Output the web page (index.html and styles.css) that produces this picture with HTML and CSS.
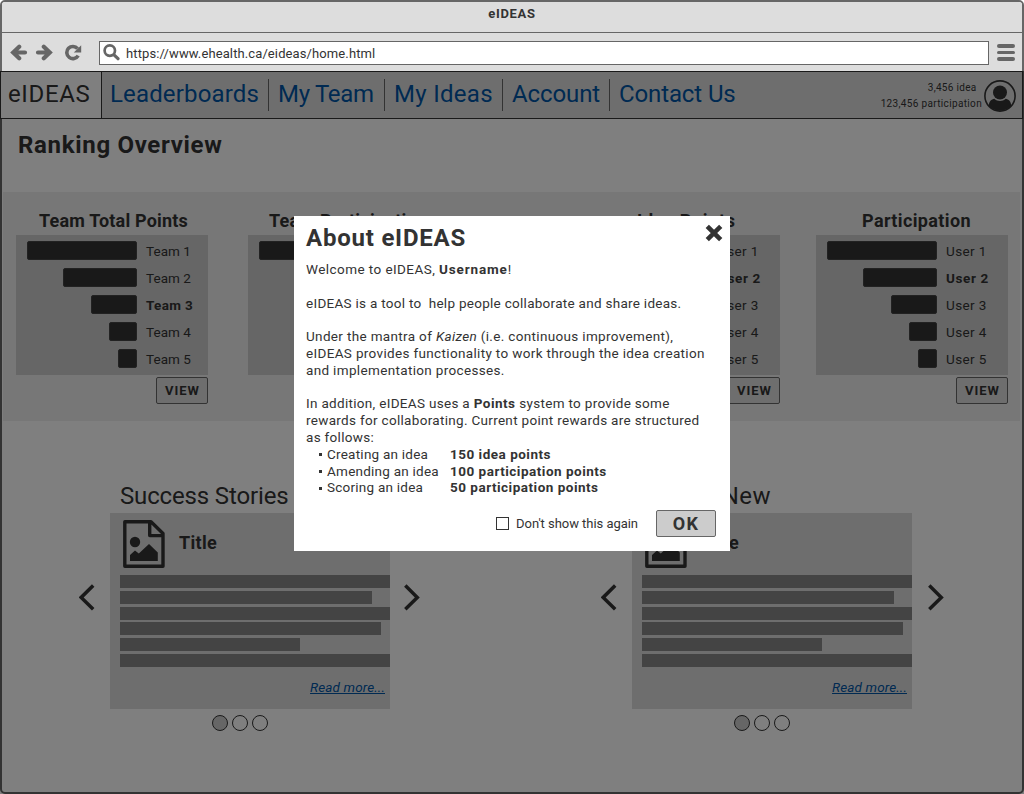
FILE: index.html
```
<!DOCTYPE html>
<html lang="en">
<head>
<meta charset="utf-8">
<title>eIDEAS</title>
<link rel="stylesheet" href="styles.css">
</head>
<body>
<svg class="defs" aria-hidden="true">
  <symbol id="picture" viewBox="0 0 42 48">
    <path d="M1.8 1.8H28L40 13.5V46.2H1.8Z M26.7 2V15.6H40" fill="none" stroke="currentColor" stroke-width="3.4" stroke-linejoin="round"/>
    <circle cx="12" cy="22" r="5.2" fill="currentColor"/>
    <path d="M7 41V35L12 30.5L15.8 33.5L26 24L34.8 32.5V41Z" fill="currentColor"/>
  </symbol>
  <symbol id="chev-left" viewBox="0 0 16 27"><path d="M14.2 1.5L2.2 13.4L14.2 25.3" fill="none" stroke="currentColor" stroke-width="3.5"/></symbol>
  <symbol id="chev-right" viewBox="0 0 16 27"><path d="M1.3 1.5L13.3 13.4L1.3 25.3" fill="none" stroke="currentColor" stroke-width="3.5"/></symbol>
</svg>
<div class="window">
  <div class="frame">
    <header class="titlebar">eIDEAS</header>
    <div class="toolbar">
      <svg class="tool-icon back" width="18" height="17" viewBox="0 0 18 17"><path d="M9.2 2.7L3.2 8.5L9.2 14.3M4 8.5H15" fill="none" stroke="currentColor" stroke-width="4.2" stroke-linecap="round" stroke-linejoin="miter"/></svg>
      <svg class="tool-icon forward" width="18" height="17" viewBox="0 0 18 17"><path d="M8.8 2.7L14.8 8.5L8.8 14.3M14 8.5H3" fill="none" stroke="currentColor" stroke-width="4.2" stroke-linecap="round" stroke-linejoin="miter"/></svg>
      <svg class="tool-icon reload" width="18" height="17" viewBox="0 0 18 17"><path d="M12.6 4.6A6.1 6.1 0 1 0 13.2 11.6" fill="none" stroke="currentColor" stroke-width="3.6"/><path d="M16.2 1.2V8.4H8.8Z" fill="currentColor"/></svg>
      <div class="address">
        <svg class="tool-icon" width="17" height="17" viewBox="0 0 17 17"><circle cx="6.8" cy="6.6" r="5.2" fill="none" stroke="currentColor" stroke-width="2.7"/><path d="M11 10.8L15 14.7" stroke="currentColor" stroke-width="3.2" stroke-linecap="round"/></svg>
        <span class="url">https://www.ehealth.ca/eideas/home.html</span>
      </div>
      <div class="menu"><i></i><i></i><i></i></div>
    </div>
    <nav class="nav">
      <a class="brand">eIDEAS</a>
      <a class="link leaderboards">Leaderboards</a>
      <a class="link team">My Team</a>
      <a class="link ideas">My Ideas</a>
      <a class="link account">Account</a>
      <a class="link contact">Contact Us</a>
      <div class="score"><span class="score-idea">3,456 idea</span><span class="score-part">123,456 participation</span></div>
      <svg class="avatar" width="32" height="32" viewBox="0 0 32 32"><circle cx="16" cy="16" r="15.1" fill="none" stroke="currentColor" stroke-width="1.6"/><circle cx="16" cy="12.5" r="7" fill="currentColor"/><path d="M4.8 26C4.8 21.5 7.5 19.3 10.3 18.8C13.5 21.8 18.5 21.8 21.7 18.8C24.5 19.3 27.2 21.5 27.2 26C21 32.3 11 32.3 4.8 26Z" fill="currentColor"/></svg>
    </nav>
    <main>
      <h1 class="page-title">Ranking Overview</h1>
      <section class="rankings">
        <article class="rank">
          <h2 class="h-total">Team Total Points</h2>
          <ul class="chart">
            <li><i class="bar b1"></i><span>Team 1</span></li><li><i class="bar b2"></i><span>Team 2</span></li><li><i class="bar b3"></i><b>Team 3</b></li><li><i class="bar b4"></i><span>Team 4</span></li><li><i class="bar b5"></i><span>Team 5</span></li>
          </ul>
          <button class="view">VIEW</button>
        </article>
        <article class="rank">
          <h2 class="h-teampart">Team Participation</h2>
          <ul class="chart">
            <li><i class="bar b1"></i></li>
          </ul>
        </article>
        <article class="rank push">
          <h2 class="h-idea">Idea Points</h2>
          <ul class="chart users">
            <li><span>User 1</span></li><li><b>User 2</b></li><li><span>User 3</span></li><li><span>User 4</span></li><li><span>User 5</span></li>
          </ul>
          <button class="view">VIEW</button>
        </article>
        <article class="rank last">
          <h2 class="h-part">Participation</h2>
          <ul class="chart users">
            <li><i class="bar b1"></i><span>User 1</span></li><li><i class="bar b2"></i><b>User 2</b></li><li><i class="bar b3"></i><span>User 3</span></li><li><i class="bar b4"></i><span>User 4</span></li><li><i class="bar b5"></i><span>User 5</span></li>
          </ul>
          <button class="view">VIEW</button>
        </article>
      </section>
      <section class="carousels">
        <article class="carousel">
          <h2>Success Stories</h2>
          <svg class="arrow"><use href="#chev-left"/></svg>
          <div class="card">
            <div class="card-head"><svg class="picture"><use href="#picture"/></svg><h3>Title</h3></div>
            <div class="lines"><i></i><i class="l2"></i><i></i><i class="l4"></i><i class="l5"></i><i></i></div>
            <a class="more">Read more...</a>
          </div>
          <svg class="arrow next"><use href="#chev-right"/></svg>
          <div class="dots"><i class="on"></i><i></i><i></i></div>
        </article>
        <article class="carousel wide">
          <h2 class="whats-new">What's New</h2>
          <svg class="arrow"><use href="#chev-left"/></svg>
          <div class="card">
            <div class="card-head"><svg class="picture"><use href="#picture"/></svg><h3>Title</h3></div>
            <div class="lines"><i></i><i class="l2"></i><i></i><i class="l4"></i><i class="l5"></i><i></i></div>
            <a class="more">Read more...</a>
          </div>
          <svg class="arrow next"><use href="#chev-right"/></svg>
          <div class="dots"><i class="on"></i><i></i><i></i></div>
        </article>
      </section>
    </main>
  </div>
  <div class="scrim"></div>
  <div class="modal" role="dialog">
    <header class="modal-head">
      <h2>About eIDEAS</h2>
      <svg class="close" width="18" height="18" viewBox="0 0 18 18"><path d="M3.9 3.9L14.1 14.1M14.1 3.9L3.9 14.1" stroke="currentColor" stroke-width="4.6" stroke-linecap="square"/></svg>
    </header>
    <p class="welcome">Welcome to eIDEAS, <b class="user">Username</b>!</p>
    <p class="intro">eIDEAS is a tool to&nbsp; help people collaborate and share ideas.</p>
    <p class="mantra">Under the mantra of <em>Kaizen</em> (i.e. continuous improvement),<br>eIDEAS provides functionality to work through the idea creation<br>and implementation processes.</p>
    <p class="points">In addition, eIDEAS uses a <b>Points</b> system to provide some<br>rewards for collaborating. Current point rewards are structured<br>as follows:</p>
    <ul class="rewards">
      <li><span>Creating an idea</span><b>150 idea points</b></li>
      <li><span>Amending an idea</span><b>100 participation points</b></li>
      <li><span>Scoring an idea</span><b>50 participation points</b></li>
    </ul>
    <footer class="modal-foot">
      <label><i class="check"></i>Don't show this again</label>
      <button class="ok">OK</button>
    </footer>
  </div>
</div>
</body>
</html>
```
FILE: styles.css
```
* { box-sizing: border-box; }
body { margin: 0; background: #fff; color: #333; font-family: Roboto, "Liberation Sans", sans-serif; font-size: 13.5px; }
h1, h2, h3, p, ul { margin: 0; padding: 0; }
ul { list-style: none; }
button { font-family: inherit; color: inherit; padding: 0; }
svg { display: block; flex: none; }
.defs { position: absolute; width: 0; height: 0; }

.window { position: relative; width: 1024px; height: 794px; overflow: hidden; }
.frame { height: 794px; border: 2px solid #666; border-radius: 5px; background: #fff; }
.scrim { position: absolute; left: 0; right: 0; top: 71px; bottom: 0; background: rgba(0, 0, 0, .5); }

/* browser chrome */
.titlebar { height: 31px; background: #ddd; border-bottom: 1px solid #666; text-align: center; font-size: 13px; font-weight: 700; line-height: 24px; letter-spacing: .7px; border-radius: 3px 3px 0 0; }
.toolbar { display: flex; align-items: center; height: 38px; padding: 1px 7px 0 8px; background: #ddd; }
.tool-icon { color: #666; }
.forward { margin-left: 7px; }
.reload { margin-left: 12px; }
.address { display: flex; align-items: center; width: 890px; height: 24px; margin: 0 8px 0 auto; padding-left: 3px; border: 1px solid #666; background: #fff; }
.url { margin-left: 6px; font-size: 13px; letter-spacing: .11px; line-height: 22px; padding-top: 2px; }
.menu { display: flex; flex-direction: column; gap: 3px; width: 18px; }
.menu i { height: 3.4px; border-radius: 2px; background: #666; }

/* navigation */
.nav { display: flex; align-items: center; height: 48px; margin: 0 -1px 0 -2px; border: 1px solid #333; background: #ddd; font-size: 24px; }
.brand { width: 101px; height: 46px; padding-left: 7px; border-right: 1px solid #333; background: #fff; line-height: 44px; letter-spacing: .64px; }
.link { height: 32px; padding-left: 9px; border-right: 1px solid #666; color: #0055a5; line-height: 30px; white-space: nowrap; }
.leaderboards { width: 167px; padding-left: 8px; letter-spacing: .15px; }
.team { width: 116px; letter-spacing: -.3px; }
.ideas { width: 118px; letter-spacing: .3px; }
.account { width: 107px; letter-spacing: -.1px; }
.contact { border-right: 0; letter-spacing: -.12px; }
.score { display: flex; flex-direction: column; align-items: flex-end; margin-left: auto; padding-top: 1px; font-size: 10px; line-height: 16px; white-space: nowrap; }
.score-idea { padding-right: 5.5px; letter-spacing: .3px; }
.score-part { letter-spacing: .34px; }
.avatar { margin: 1px 6px 0 2px; }

/* rankings */
.page-title { height: 73px; padding-left: 16px; font-size: 24px; line-height: 53px; letter-spacing: .68px; }
.rankings { display: flex; gap: 40px; height: 229px; margin: 0 2px 0 1px; padding: 17px 0 0 13px; background: #eee; }
.rank { display: flex; flex: none; flex-direction: column; width: 192px; }
.push { margin-left: 108px; }
.last { margin-left: -4px; }
.rank h2 { height: 26px; font-size: 18px; line-height: 24px; white-space: nowrap; }
.h-total { padding-left: 23px; letter-spacing: .18px; }
.h-teampart { padding-left: 21px; letter-spacing: .25px; }
.h-idea { padding-left: 49px; letter-spacing: .7px; }
.h-part { padding-left: 46px; letter-spacing: .38px; }
.chart { height: 140px; padding-top: 3px; background: #ccc; }
.chart li { display: flex; align-items: center; justify-content: flex-end; height: 27px; line-height: 27px; }
.chart span { letter-spacing: .05px; }
.chart b { letter-spacing: .35px; }
.chart.users span { letter-spacing: .4px; }
.chart.users b { letter-spacing: .6px; }
.bar { height: 19px; margin: 0 9px 2px 0; border: 1px solid #444; border-radius: 2px; background: #333; }
.chart span, .chart b { width: 62px; }
.chart li > .bar:last-child { margin-right: 71px; }
.b1 { width: 110px; }
.b2 { width: 74px; }
.b3 { width: 46px; }
.b4 { width: 28px; }
.b5 { width: 19px; }
.view { align-self: flex-end; width: 52px; height: 27px; margin-top: 2px; border: 1px solid #666; border-radius: 2px; background: #ddd; font-size: 13px; font-weight: 700; letter-spacing: 1px; line-height: 23px; padding: 0 0 1px 1px; }

/* carousels */
.carousels { display: flex; gap: 181px; padding: 59px 0 0 77px; }
.carousel { display: grid; grid-template-columns: 31px 280px 14px 16px; grid-template-rows: 33px 196px 28px; align-items: center; }
.wide { grid-template-columns: 31px 280px 16px 16px; }
.carousel h2 { grid-column: 2 / 5; padding-left: 10px; font-size: 24px; font-weight: 400; line-height: 32px; letter-spacing: -.15px; align-self: start; }
.carousel .whats-new { letter-spacing: .4px; }
.arrow { grid-row: 2; grid-column: 1; width: 16px; height: 27px; margin-top: -27px; color: #333; }
.next { grid-column: 4; }
.card { grid-row: 2; grid-column: 2; display: flex; flex-direction: column; height: 196px; padding: 7px 0 0 10px; background: #ddd; }
.card-head { display: flex; height: 55px; padding-left: 3px; }
.picture { width: 42px; height: 48px; }
.card h3 { padding-left: 14px; font-size: 18px; line-height: 46px; letter-spacing: .3px; }
.lines { display: flex; flex-direction: column; gap: 2.8px; }
.lines i { height: 13px; background: #888; }
.lines .l2 { width: 252px; }
.lines .l4 { width: 261px; }
.lines .l5 { width: 180px; }
.more { align-self: flex-end; margin: 12px 5px 0 0; color: #0055a5; font-style: italic; line-height: 16px; letter-spacing: .13px; text-decoration: underline; }
.dots { grid-row: 3; grid-column: 2; display: flex; justify-content: center; gap: 4px; padding-right: 20px; }
.dots i { width: 16px; height: 16px; border: 1px solid #333; border-radius: 50%; }
.dots .on { background: #ccc; }

/* dialog */
.modal { position: absolute; left: 294px; top: 216px; display: flex; flex-direction: column; width: 436px; height: 335px; padding: 0 14px 14px 12px; background: #fff; line-height: 16.8px; white-space: nowrap; }
.modal-head { display: flex; justify-content: space-between; height: 45px; }
.modal-head h2 { font-size: 24px; line-height: 45px; letter-spacing: .78px; }
.close { margin: 8px -7px 0 0; }
.modal p { margin-bottom: 16.8px; }
.modal .points { margin-bottom: 0; }
.welcome { letter-spacing: .43px; }
.user { letter-spacing: .85px; }
.intro { letter-spacing: .28px; }
.mantra { letter-spacing: .34px; }
.points { letter-spacing: .31px; }
.points b { letter-spacing: .5px; }
.rewards li { display: flex; align-items: center; padding-left: 13px; letter-spacing: .24px; }
.rewards li::before { content: ""; width: 3px; height: 3px; margin: 1px 5px 0 0; background: #333; }
.rewards span { width: 123px; }
.rewards b { letter-spacing: .5px; }
.modal-foot { display: flex; align-items: center; justify-content: flex-end; gap: 18px; margin-top: auto; }
.modal-foot label { display: flex; align-items: center; gap: 7px; padding-top: 1px; font-size: 13px; letter-spacing: -.04px; }
.check { width: 13px; height: 13px; border: 1px solid #333; }
.ok { width: 60px; height: 27px; border: 1px solid #666; border-radius: 2px; background: #ccc; font-size: 18px; font-weight: 700; line-height: 24px; letter-spacing: 1.2px; }
```
